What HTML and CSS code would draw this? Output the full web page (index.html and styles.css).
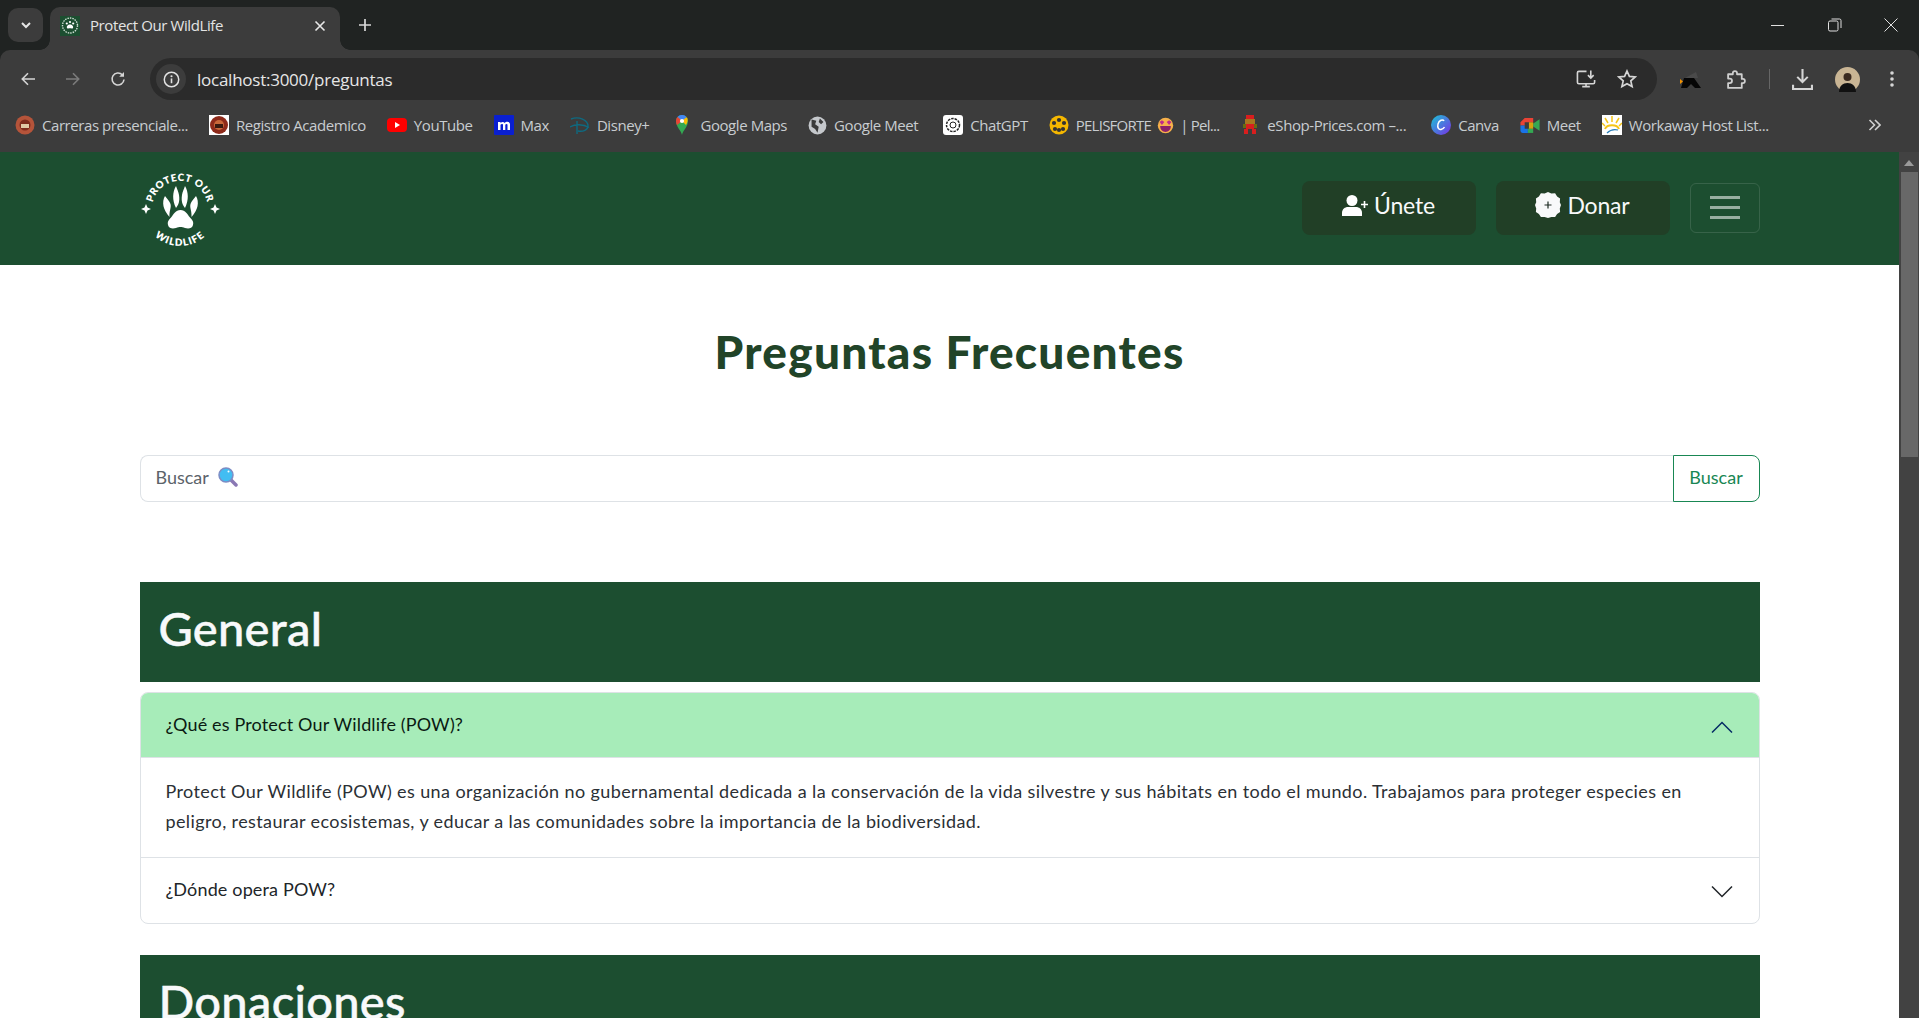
FILE: index.html
```html
<!DOCTYPE html>
<html lang="es">
<head>
<meta charset="utf-8">
<title>Protect Our WildLife</title>
<link rel="stylesheet" href="styles.css">
</head>
<body>
<div class="window">
  <header class="tabstrip">
    <button class="tab-menu"><svg width="14" height="14" viewBox="0 0 14 14"><path d="M3 5l4 4 4-4" fill="none" stroke="#e6e6e6" stroke-width="2"/></svg></button>
    <div class="tab">
      <svg class="favicon" width="20" height="20" viewBox="0 0 20 20"><rect width="20" height="20" fill="#1c4e30"/><circle cx="10" cy="9.500" r="7.500" fill="none" stroke="#cfe0d4" stroke-width="1.400" stroke-dasharray="1.500 1"/><path d="M10 8.500c2.200 0 3.800 2 3 3.400-.6 1-1.900.4-3 .4s-2.400.6-3-.4C6.200 10.500 7.800 8.500 10 8.500z" fill="#fff"/><circle cx="6.800" cy="7.500" r="1.100" fill="#fff"/><circle cx="10" cy="6" r="1.100" fill="#fff"/><circle cx="13.200" cy="7.500" r="1.100" fill="#fff"/></svg>
      <span class="tab-title">Protect Our WildLife</span>
      <svg width="12" height="12" viewBox="0 0 12 12"><path d="M1.500 1.500l9 9M10.500 1.500l-9 9" stroke="#e8e8e8" stroke-width="1.600"/></svg>
    </div>
    <svg class="newtab" width="14" height="14" viewBox="0 0 14 14"><path d="M7 1v12M1 7h12" stroke="#d8d8d8" stroke-width="1.700"/></svg>
    <div class="win-controls">
      <svg width="14" height="14" viewBox="0 0 14 14"><path d="M0 7.500h13" stroke="#e0e0e0" stroke-width="1"/></svg>
      <svg width="14" height="14" viewBox="0 0 14 14"><rect x=".5" y="3" width="9.500" height="10" rx="1.500" fill="none" stroke="#e0e0e0"/><path d="M3.500 1H11.500a1.500 1.500 0 0 1 1.500 1.500V10" fill="none" stroke="#e0e0e0"/></svg>
      <svg width="14" height="14" viewBox="0 0 14 14"><path d="M.5.500l13 13M13.500.500l-13 13" stroke="#e0e0e0" stroke-width="1"/></svg>
    </div>
  </header>

  <div class="toolbar">
    <svg class="nav-icon" width="16" height="16" viewBox="0 0 16 16"><path d="M15 8H2.500M8 2.300L2.300 8 8 13.700" fill="none" stroke="#d5d5d5" stroke-width="1.600"/></svg>
    <svg class="nav-icon" width="16" height="16" viewBox="0 0 16 16"><path d="M1 8h12.500M8 2.300L13.700 8 8 13.700" fill="none" stroke="#7c7c7c" stroke-width="1.600"/></svg>
    <svg class="nav-icon reload" width="16" height="16" viewBox="0 0 16 16"><path d="M14 8.500A6 6 0 1 1 12.300 3.800" fill="none" stroke="#d5d5d5" stroke-width="1.600"/><path d="M14 1v4.800H9.200z" fill="#d5d5d5"/></svg>
    <div class="omnibox">
      <span class="site-info"><svg width="17" height="17" viewBox="0 0 16 16"><circle cx="8" cy="8" r="6.800" fill="none" stroke="#e2e2e2" stroke-width="1.400"/><path d="M8 7v4.500" stroke="#e2e2e2" stroke-width="1.500"/><circle cx="8" cy="4.900" r="1" fill="#e2e2e2"/></svg></span>
      <span class="url">localhost:3000/preguntas</span>
      <svg width="21" height="20" viewBox="0 0 22 20"><path d="M11 2H3a1.500 1.500 0 0 0-1.500 1.500v10A1.500 1.500 0 0 0 3 15h15a1.500 1.500 0 0 0 1.500-1.500V11M6.500 18h8M10.500 15v3" fill="none" stroke="#d5d5d5" stroke-width="1.700"/><path d="M15.500 1v7.500M12.500 6l3 3 3-3" fill="none" stroke="#d5d5d5" stroke-width="1.700"/></svg>
      <svg class="star" width="20" height="20" viewBox="0 0 20 20"><path d="M10 2l2.400 5.400 5.800.6-4.400 3.900 1.300 5.700L10 14.700l-5.100 2.900 1.300-5.700L1.800 8l5.800-.6z" fill="none" stroke="#d5d5d5" stroke-width="1.700"/></svg>
    </div>
    <svg class="ext-kettle" width="22" height="20" viewBox="0 0 22 20"><path d="M5 9l11-6 2 6z" fill="#4a4a4a"/><path d="M4 9h10l7 10h-6l-4-4-4 4H1z" fill="#050505"/><path d="M0 10l3 2.500L0 15z" fill="#f39200"/></svg>
    <svg class="ext-puzzle" width="21" height="21" viewBox="0 0 20 20"><path d="M2 5h4.500V4a2 2 0 0 1 4 0v1H15v4.500h1a2 2 0 0 1 0 4h-1V18H2v-4.500h1.500a2.200 2.200 0 0 0 0-4.400H2z" fill="none" stroke="#cfcfcf" stroke-width="1.700" stroke-linejoin="round"/></svg>
    <span class="toolbar-sep"></span>
    <svg class="ext-download" width="21" height="21" viewBox="0 0 20 20"><path d="M10 0v12M5 7.500l5 5 5-5" fill="none" stroke="#d5d5d5" stroke-width="2"/><path d="M1 15v4h18v-4" fill="none" stroke="#d5d5d5" stroke-width="2"/></svg>
    <svg class="avatar" width="25" height="25" viewBox="0 0 25 25"><circle cx="12.500" cy="12.500" r="12.500" fill="#c9b594"/><circle cx="12.500" cy="10" r="4" fill="#3a2a20"/><path d="M4 25c0-6 4-9 8.500-9s8.500 3 8.500 9z" fill="#111"/></svg>
    <svg class="kebab" width="4" height="16" viewBox="0 0 4 16"><circle cx="2" cy="2" r="1.800" fill="#d5d5d5"/><circle cx="2" cy="8" r="1.800" fill="#d5d5d5"/><circle cx="2" cy="14" r="1.800" fill="#d5d5d5"/></svg>
  </div>

  <nav class="bookmarks">
    <span class="bm"><svg width="20" height="20" viewBox="0 0 20 20"><circle cx="10" cy="10" r="9.500" fill="#b5543a"/><circle cx="10" cy="10" r="5.500" fill="#7e2a1c"/><rect x="6" y="9" width="8" height="4" fill="#e0c7a4"/></svg>Carreras presenciale...</span>
    <span class="bm"><svg width="20" height="20" viewBox="0 0 20 20"><rect width="20" height="20" fill="#fff"/><circle cx="10" cy="10" r="9" fill="#8e2a1a"/><circle cx="10" cy="10" r="5" fill="#c8683a"/><rect x="6" y="9" width="8" height="4" fill="#3a1a10"/></svg>Registro Academico</span>
    <span class="bm"><svg width="20" height="20" viewBox="0 0 20 20"><rect y="3" width="20" height="14" rx="4" fill="#f00"/><path d="M8 7l5 3-5 3z" fill="#fff"/></svg>YouTube</span>
    <span class="bm"><svg width="20" height="20" viewBox="0 0 20 20"><rect width="20" height="20" rx="1" fill="#0a1fd0"/><path d="M4 15V7h2.500v1c1.200-1.500 3.400-1.500 4.100 0 1.300-1.600 5.400-1.900 5.400 1.300V15h-2.500V9.800c0-1.200-1.800-1.100-2.200 0V15H9V9.800c0-1.200-1.900-1.100-2.500 0V15z" fill="#fff"/></svg>Max</span>
    <span class="bm"><svg width="20" height="20" viewBox="0 0 20 20"><path d="M1 4c8-3 17 1 17 7 0 4-5 6-10 5M7 6v13M0 12c5-3 13-3 19 .5" fill="none" stroke="#0f6a80" stroke-width="1.400"/></svg>Disney+</span>
    <span class="bm bm-maps"><svg width="14" height="20" viewBox="0 0 12 20"><path d="M6 20C5 15 0 12 0 6a6 6 0 0 1 12 0c0 6-5 9-6 14z" fill="#34a853"/><path d="M2 2l8 8c2-3 2-6 1-7.500z" fill="#fbbc04"/><path d="M1.500 2A6 6 0 0 1 10.500 2L6 6z" fill="#4285f4"/><path d="M0 6c0-1.500.6-3 1.500-4L6 6 1 10C.4 9 0 7.500 0 6z" fill="#ea4335"/><circle cx="6" cy="6" r="2.100" fill="#fff"/></svg>Google Maps</span>
    <span class="bm"><svg width="19" height="19" viewBox="0 0 16 16"><circle cx="8" cy="8" r="7.500" fill="#c5c8cc"/><path d="M3 3l4 1-1 3 3 2-1 5-2-3-3-2zM10 2l3 3-2 2-2-2z" fill="#3c3c3c"/></svg>Google Meet</span>
    <span class="bm bm-shift"><svg width="20" height="20" viewBox="0 0 20 20"><rect width="20" height="20" rx="3" fill="#fff"/><circle cx="10" cy="10" r="6.500" fill="none" stroke="#222" stroke-width="1.500" stroke-dasharray="2.500 1"/><circle cx="10" cy="10" r="3" fill="none" stroke="#222"/></svg>ChatGPT</span>
    <span class="bm bm-tight"><svg width="20" height="20" viewBox="0 0 20 20"><circle cx="10" cy="10" r="9.500" fill="#f5b700"/><circle cx="10" cy="5" r="2.100" fill="#333"/><circle cx="10" cy="15" r="2.100" fill="#333"/><circle cx="5" cy="8" r="2.100" fill="#333"/><circle cx="15" cy="8" r="2.100" fill="#333"/><circle cx="6" cy="14" r="2.100" fill="#333"/><circle cx="14" cy="14" r="2.100" fill="#333"/></svg>PELISFORTE <svg class="inline-emoji" width="17" height="19" viewBox="0 0 14 16"><circle cx="7" cy="8" r="6.500" fill="#f6b04a"/><path d="M2 5l2-1.500L6 5 4 7.500zM8 5l2-1.500L12 5l-2 2.500z" fill="#c0278c"/><path d="M2.500 8.500h9c0 3-2 5-4.500 5s-4.500-2-4.500-5z" fill="#8c1f6a"/></svg> | Pel...</span>
    <span class="bm"><svg width="20" height="20" viewBox="0 0 16 20"><rect x="4" width="8" height="4" fill="#d81e1e"/><rect x="3" y="4" width="10" height="5" fill="#a9761f"/><rect x="4" y="9" width="8" height="5" fill="#d81e1e"/><rect x="1" y="9" width="3" height="4" fill="#6b6b12"/><rect x="12" y="9" width="3" height="4" fill="#6b6b12"/><rect x="2" y="14" width="4" height="5" fill="#d81e1e"/><rect x="10" y="14" width="4" height="5" fill="#d81e1e"/></svg>eShop-Prices.com –...</span>
    <span class="bm bm-shift"><svg width="20" height="20" viewBox="0 0 20 20"><defs><linearGradient id="canva" x1="0" y1="0" x2="1" y2="1"><stop offset="0" stop-color="#19c6d6"/><stop offset="1" stop-color="#7a2ee6"/></linearGradient></defs><circle cx="10" cy="10" r="10" fill="url(#canva)"/><path d="M13 6c-1-2-5-1-6 3s1 6 3 5.500 3-1.500 3.500-2.500" fill="none" stroke="#fff" stroke-width="1.500"/></svg>Canva</span>
    <span class="bm"><svg width="20" height="17" viewBox="0 0 18 16"><path d="M4 1h8v4H4v3H0V5z" fill="#ea4335"/><path d="M0 8h4v3h3v4H2a2 2 0 0 1-2-2z" fill="#1a73e8"/><path d="M7 11h5v4H7z" fill="#34a853"/><path d="M12 1v5l6-4v11l-6-4v6h0V1z" fill="#34a853"/><path d="M8 5h4v6H8z" fill="#fbbc04" opacity=".8"/></svg>Meet</span>
    <span class="bm"><svg width="20" height="20" viewBox="0 0 20 20"><rect width="20" height="20" fill="#fff"/><path d="M3 14c2-5 12-5 14 0" fill="none" stroke="#f5c518" stroke-width="2"/><path d="M10 7V1M6 8L3 3M14 8l3-5M3 11L0 8M17 11l3-3" stroke="#f5c518" stroke-width="1.500"/><path d="M5 18c3-3 7-4 11-3" fill="none" stroke="#2a7fb8" stroke-width="1.200"/></svg>Workaway Host List...</span>
    <svg class="bm-more" width="13" height="12" viewBox="0 0 13 12"><path d="M1.500 1l5 5-5 5M7 1l5 5-5 5" fill="none" stroke="#d0d0d0" stroke-width="1.600"/></svg>
  </nav>

  <div class="viewport">
    <div class="page">
      <div class="sitenav">
        <div class="container nav-inner">
          <svg class="logo" width="82" height="86" viewBox="0 0 82 86">
            <defs>
              <path id="logo-top" d="M12.400 38.100A28 28 0 0 1 67.600 38.100"/>
              <path id="logo-bottom" d="M8 61.500A37 37 0 0 0 72 61.500"/>
            </defs>
            <text class="logo-text"><textPath href="#logo-top" startOffset="50%" text-anchor="middle">PROTECT OUR</textPath></text>
            <text class="logo-text logo-text-bottom"><textPath href="#logo-bottom" startOffset="50%" text-anchor="middle">WILDLIFE</textPath></text>
            <path d="M6 38l1.500 3.500L11 43l-3.500 1.500L6 48l-1.500-3.500L1 43l3.500-1.500zM75 38l1.500 3.500L80 43l-3.500 1.500L75 48l-1.500-3.500L70 43l3.500-1.500z" fill="#fff"/>
            <path d="M25 30c-3.500 6-2 14 4.500 21-.5-6 2-9 1-13-.8-3-3.500-5-5.500-8zM36 20c-3.500 6-4 14 0 22 2.500-3 4-7 3-13-.4-3-2-6-3-9zM45 20c-1 3-2.600 6-3 9-1 6 .5 10 3 13 4-8 3.500-16 0-22zM56 30c-2 3-4.700 5-5.500 8-1 4 1.500 7 1 13 6.500-7 8-15 4.500-21z" fill="#fff"/>
            <path d="M40.500 44c5 0 6.500 4 9.500 7.500 2.800 3 3.800 4.500 3 7.500-1 3.800-5 4-8 3-1.800-.6-3-1-4.500-1s-2.700.4-4.500 1c-3 1-7 .8-8-3-.8-3 .2-4.500 3-7.500 3-3.500 4.500-7.500 9.500-7.500z" fill="#fff"/>
          </svg>
          <div class="nav-actions">
            <a class="btn-nav"><svg width="26" height="21" viewBox="0 0 26 21"><circle cx="10" cy="5.500" r="5.500" fill="#fff"/><path d="M0 21v-3c0-4 3-6 6-6h8c3 0 6 2 6 6v3z" fill="#fff"/><path d="M22.500 6v7M19 9.500h7" stroke="#fff" stroke-width="1.600"/></svg>Únete</a>
            <a class="btn-nav"><svg width="26" height="26" viewBox="0 0 26 26"><path d="M13 0l3.400 1.500 3.700-.2 2 3.100 3 2.100-.3 3.700L26 13l-1.200 3.400.3 3.700-3 2-2 3-3.700-.1L13 26l-3.400-1-3.700.1-2-3-3-2 .3-3.700L0 13l1.200-2.800-.3-3.700 3-2.100 2-3.100 3.700.2z" fill="#f8f9fa"/><path d="M13 9.500v7M9.500 13h7" stroke="#1c2a22" stroke-width="1.200"/></svg>Donar</a>
            <button class="toggler" aria-label="Menú"><span></span><span></span><span></span></button>
          </div>
        </div>
      </div>

      <main class="container">
        <h1 class="page-title">Preguntas Frecuentes</h1>
        <form class="search">
          <div class="search-input">Buscar <svg width="20" height="20" viewBox="0 0 20 20"><path d="M12 12l6 6" stroke="#8a78b4" stroke-width="3.500" stroke-linecap="round"/><circle cx="8" cy="8" r="7" fill="#42bdf2" stroke="#7d8cc4" stroke-width="1.500"/><circle cx="10.500" cy="4.500" r="1" fill="#fff"/></svg></div>
          <button class="search-btn" type="button">Buscar</button>
        </form>

        <section class="faq-section">
          <h2 class="section-title">General</h2>
          <div class="accordion">
            <div class="acc-head open">
              <span>¿Qué es Protect Our Wildlife (POW)?</span>
              <svg width="22" height="12" viewBox="0 0 22 12"><path d="M1 11.500L11 1.500l10 10" fill="none" stroke="#052c65" stroke-width="1.500"/></svg>
            </div>
            <div class="acc-body">Protect Our Wildlife (POW) es una organización no gubernamental dedicada a la conservación de la vida silvestre y sus hábitats en todo el mundo. Trabajamos para proteger especies en peligro, restaurar ecosistemas, y educar a las comunidades sobre la importancia de la biodiversidad.</div>
            <div class="acc-head">
              <span>¿Dónde opera POW?</span>
              <svg width="22" height="12" viewBox="0 0 22 12"><path d="M1 .5l10 10 10-10" fill="none" stroke="#212529" stroke-width="1.500"/></svg>
            </div>
          </div>
        </section>

        <section class="faq-section">
          <h2 class="section-title">Donaciones</h2>
        </section>
      </main>
    </div>
    <div class="scrollbar">
      <svg width="10" height="6" viewBox="0 0 10 6"><path d="M5 0l5 6H0z" fill="#9a9a9a"/></svg>
      <span class="scroll-thumb"></span>
    </div>
  </div>
</div>
</body>
</html>
```
FILE: styles.css
```css
* { box-sizing: border-box; }
html, body { margin: 0; height: 100%; overflow: hidden; }
body { font-family: Lato, "Noto Sans", sans-serif; background: #fff; color: #212529; }
svg { display: block; flex: none; }

.window { display: flex; flex-direction: column; height: 1018px; background: #202322; }

.tabstrip { height: 50px; background: #202322; display: flex; align-items: flex-start; flex: none; }
.tab-menu { width: 35px; height: 34px; margin: 8px 7px 0 8px; padding: 0; background: #3c3c3c; border: 0; border-radius: 10px; display: flex; align-items: center; justify-content: center; }
.tab { position: relative; width: 290px; height: 43px; margin-top: 7px; background: #3c3c3c; border-radius: 10px 10px 0 0; display: flex; align-items: center; padding: 0 14px 6px 10px; color: #e4e4e4; font: 15px "Open Sans", sans-serif; }
.tab::before, .tab::after { content: ""; position: absolute; bottom: 0; width: 10px; height: 10px; }
.tab::before { left: -10px; background: radial-gradient(circle at 0 0, transparent 9.500px, #3c3c3c 10px); }
.tab::after { right: -10px; background: radial-gradient(circle at 100% 0, transparent 9.500px, #3c3c3c 10px); }
.favicon { margin-right: 10px; }
.tab-title { flex: 1; letter-spacing: -.4px; margin-bottom: 2px; }
.newtab { margin: 18px 0 0 18px; }
.win-controls { margin-left: auto; display: flex; gap: 42.500px; padding: 18px 21px 0 0; }

.toolbar { height: 50px; padding: 8px 25px 0 20px; background: #3c3c3c; border-radius: 10px 10px 0 0; display: flex; align-items: center; flex: none; }
.nav-icon { margin-right: 29px; }
.nav-icon.reload { margin-right: 24px; }
.omnibox { flex: 1; height: 42px; background: #2b2b2b; border-radius: 21px; display: flex; align-items: center; padding: 0 20px 0 6px; color: #e6e6e6; font: 17px "Open Sans", sans-serif; }
.site-info { width: 30px; height: 30px; border-radius: 50%; background: #3c3c3c; display: flex; align-items: center; justify-content: center; margin-right: 11px; }
.url { flex: 1; letter-spacing: -.25px; }
.star { margin-left: 20px; }
.ext-kettle { margin-left: 23px; }
.ext-puzzle { margin-left: 24px; }
.toolbar-sep { width: 1px; height: 20px; background: #666; margin: 0 22px; }
.avatar { margin-left: 22px; }
.kebab { margin-left: 30px; }

.bookmarks { height: 52px; padding: 0 38px 2px 15px; background: #3c3c3c; display: flex; align-items: center; color: #c8ccd0; font: 15px "Open Sans", sans-serif; letter-spacing: -.43px; flex: none; }
.bm { display: flex; align-items: center; gap: 7px; margin-right: 21px; white-space: nowrap; }
.bm-maps { margin-left: 5px; gap: 11px; }
.bm-shift { margin-left: 4px; }
.bm-tight { letter-spacing: -.75px; }
.inline-emoji { margin: 0 -1px; }
.bm-more { margin-left: auto; }

.viewport { flex: 1; min-height: 0; display: flex; }
.page { flex: 1; min-width: 0; overflow: hidden; background: #fff; }
.container { width: 1620px; margin: 0 auto; }
.scrollbar { width: 20px; background: #424242; display: flex; flex-direction: column; align-items: center; padding-top: 8px; flex: none; }
.scroll-thumb { width: 17px; height: 285px; margin-top: 6px; background: #686868; }

.sitenav { height: 113px; background: #1c4e30; }
.nav-inner { height: 100%; display: flex; align-items: center; justify-content: space-between; }
.logo-text { font: 800 10px Lato, sans-serif; fill: #fff; letter-spacing: .5px; }
.logo-text-bottom { letter-spacing: 1.100px; }
.nav-actions { display: flex; align-items: center; gap: 20px; padding-bottom: 2px; }
.btn-nav { width: 174px; height: 54px; padding-bottom: 5px; background: #213f26; border-radius: 8px; color: #f8f9fa; font-size: 23px; letter-spacing: -.2px; display: flex; align-items: center; justify-content: center; gap: 6px; }
.toggler { width: 70px; height: 50px; padding: 0; background: transparent; border: 1px solid rgba(255,255,255,.12); border-radius: 6px; display: flex; flex-direction: column; align-items: center; justify-content: center; gap: 7px; }
.toggler span { width: 30px; height: 3px; background: rgba(255,255,255,.55); }

.page-title { margin: 0; padding-top: 59px; height: 190px; text-align: center; font-size: 46px; font-weight: 900; letter-spacing: 1.250px; line-height: 56px; color: #214428; }

.search { display: flex; height: 47px; }
.search-input { flex: 1; border: 1px solid #dee2e6; border-right: 0; border-radius: 8px 0 0 8px; display: flex; align-items: center; gap: 9px; padding: 0 0 4px 15px; color: #5c636a; font-size: 18px; }
.search-btn { width: 87px; background: #fff; border: 1px solid #198754; border-radius: 0 8px 8px 0; color: #198754; font: 18px Lato, sans-serif; padding: 0 0 4px; }

.faq-section { margin-top: 80px; }
.faq-section + .faq-section { margin-top: 31px; }
.section-title { margin: 0 0 10px; height: 100px; background: #1c4e30; color: #f8f9fa; font-size: 47px; font-weight: 500; letter-spacing: .3px; -webkit-text-stroke: .5px #f8f9fa; line-height: 92px; padding-left: 19px; }
.accordion { border: 1px solid #dee2e6; border-radius: 8px; overflow: hidden; }
.acc-head { height: 65px; display: flex; align-items: center; justify-content: space-between; padding: 0 26px 3px 25px; font-size: 18px; letter-spacing: .15px; color: #212529; }
.acc-head svg { margin-top: 5px; }
.acc-head.open { background: #a7ecb9; box-shadow: inset 0 -1px 0 #dee2e6; color: #0a1a12; }
.acc-body { padding: 18px 25px 21px; font-size: 18px; letter-spacing: .39px; line-height: 30px; border-bottom: 1px solid #dee2e6; color: #2b3035; }
```
